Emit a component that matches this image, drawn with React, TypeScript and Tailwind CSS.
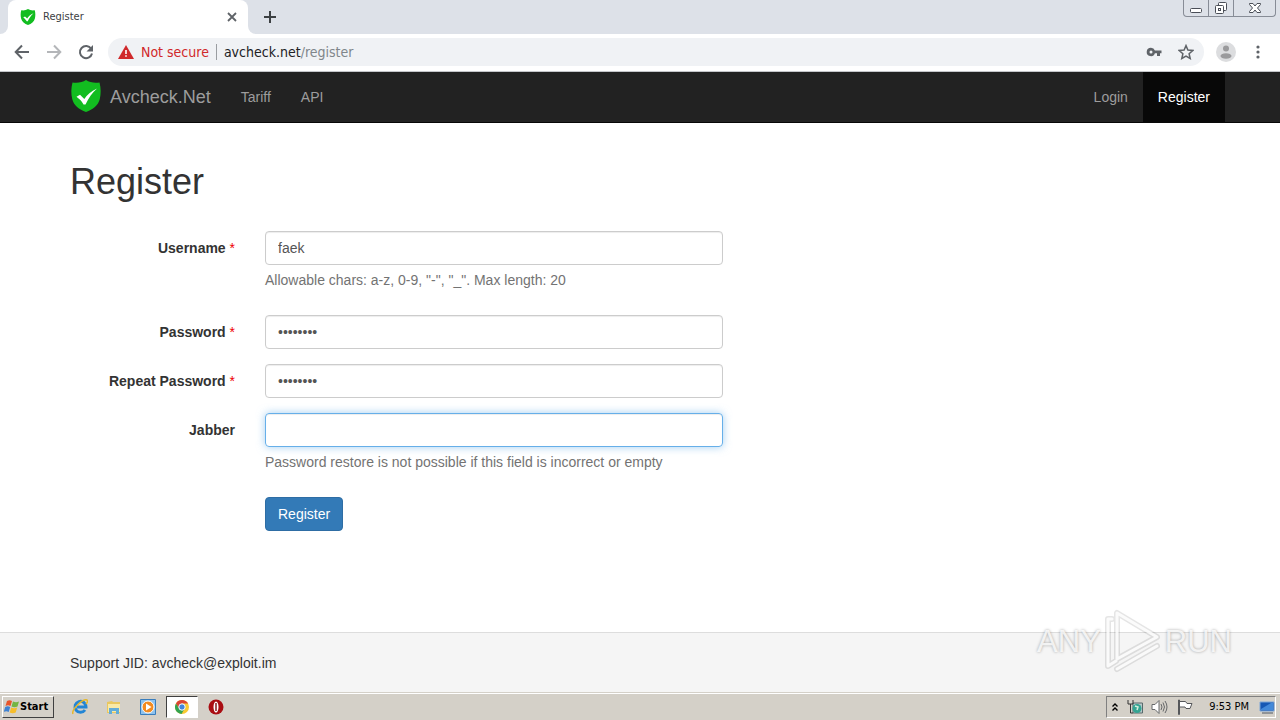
import { useState } from 'react';
import type { ReactNode } from 'react';

const Shield = ({ className }: { className: string }) => (
  <svg viewBox="0 0 30 32" className={className} aria-hidden="true">
    <path
      d="M15 0C11.500 2.400 6.500 3.300 1.500 2.500 0 8 0 14 1.200 19 2.800 25.500 8 29.500 15 32c7-2.500 12.200-6.500 13.800-13C30 14 30 8 28.500 2.500 23.500 3.300 18.500 2.400 15 0z"
      fill="#12bd20"
    />
    <path d="M5.500 16.800L9 14.800l4.300 4.200C16 15 20 11 26 8.500 21 13 17.500 18 14.500 24.500h-2C10.500 21 8.500 19 5.500 16.800z" fill="#fff" />
  </svg>
);

const TabStrip = () => (
  <div className="flex h-[34px] items-start justify-between bg-[#dde1e8]">
    <div className="flex h-full items-end">
      <div className="h-2 w-2 bg-white">
        <div className="h-2 w-2 rounded-br-lg bg-[#dde1e8]" />
      </div>
      <div className="flex h-full w-60 items-center rounded-t-lg bg-white pr-2.5 pl-3">
        <Shield className="h-4 w-4" />
        <span className="ml-[7px] flex-1 text-[11px] text-[#3c4043]">Register</span>
        <button aria-label="Close tab" className="flex h-3 w-3 items-center justify-center">
          <svg viewBox="0 0 12 12" className="h-3 w-3" stroke="#5f6368" strokeWidth="1.8">
            <path d="M2 2l8 8M10 2l-8 8" />
          </svg>
        </button>
      </div>
      <div className="h-2 w-2 bg-white">
        <div className="h-2 w-2 rounded-bl-lg bg-[#dde1e8]" />
      </div>
      <button aria-label="New tab" className="ml-[7px] flex h-full w-[14px] items-center">
        <svg viewBox="0 0 14 14" className="h-[14px] w-[14px]" stroke="#3c4043" strokeWidth="2">
          <path d="M7 1v12M1 7h12" />
        </svg>
      </button>
    </div>
    <div className="mr-1 flex h-[17px] overflow-hidden rounded-b border border-t-0 border-[#878c96] text-[#4a4e57]">
      <button aria-label="Minimize" className="flex w-[25px] items-center justify-center border-r border-[#878c96]">
        <svg viewBox="0 0 14 14" className="h-[14px] w-[14px]" fill="#fff" stroke="currentColor">
          <rect x="1.500" y="7.500" width="11" height="4" rx="1" />
        </svg>
      </button>
      <button aria-label="Restore" className="flex w-[25px] items-center justify-center border-r border-[#878c96]">
        <svg viewBox="0 0 14 14" className="h-[14px] w-[14px]" fill="#fff" stroke="currentColor">
          <rect x="4.500" y="1.500" width="8" height="8" rx="1" />
          <rect x="1.500" y="4.500" width="8" height="8" rx="1" />
          <rect x="4.500" y="7.500" width="2" height="2" />
        </svg>
      </button>
      <button aria-label="Close" className="flex w-[41px] items-center justify-center">
        <svg viewBox="0 0 14 14" className="h-[14px] w-[14px]" fill="#fff" stroke="currentColor">
          <path d="M1.500 2.500h3.500l2 2.500 2-2.500h3.500v1L9.500 7l3 3.500v1H9L7 9l-2 2.500H1.500v-1L4.500 7l-3-3.500z" />
        </svg>
      </button>
    </div>
  </div>
);

const Toolbar = () => (
  <div className="flex h-[38px] items-center border-b border-[#c4c6ca] bg-white pr-3.5 pb-px pl-3.5 text-[#5f6368]">
    <button aria-label="Back">
      <svg viewBox="0 0 16 16" className="h-4 w-4" fill="none" stroke="currentColor" strokeWidth="2">
        <path d="M15 8H2M8 1.500L1.700 8 8 14.500" />
      </svg>
    </button>
    <button aria-label="Forward" className="ml-4 text-[#b4b6b9]">
      <svg viewBox="0 0 16 16" className="h-4 w-4" fill="none" stroke="currentColor" strokeWidth="2">
        <path d="M1 8h13M8 1.500L14.300 8 8 14.500" />
      </svg>
    </button>
    <button aria-label="Reload" className="ml-4">
      <svg viewBox="0 0 16 16" className="h-4 w-4" fill="none" stroke="currentColor" strokeWidth="2">
        <path d="M13.200 4.800A6.100 6.100 0 1 0 14 9.500" />
        <path d="M15 1v6.500H8.500z" fill="currentColor" stroke="none" />
      </svg>
    </button>
    <div className="ml-3.5 flex h-7 flex-1 items-center rounded-full bg-[#f0f2f5] pr-2.5 pl-2.5">
      <svg viewBox="0 0 16 14" className="h-[14px] w-4" aria-hidden="true">
        <path d="M8 0l8 14H0z" fill="#d0292b" />
        <path d="M7.200 5h1.600v4H7.200zM7.200 10.200h1.600v1.600H7.200z" fill="#fff" />
      </svg>
      <span className="ml-[7px] text-sm text-[#d0292b]">Not secure</span>
      <span className="mx-[7px] h-4 w-px bg-[#9a9da1]" />
      <span className="flex-1 text-sm text-[#80868b]">
        <span className="text-[#202124]">avcheck.net</span>/register
      </span>
      <button aria-label="Saved password">
        <svg viewBox="0 0 16 10" className="h-2.5 w-4" fill="currentColor">
          <path
            fillRule="evenodd"
            d="M5 .8a4.200 4.200 0 1 0 3.900 5.500H11V9h3V6.300h1.500V3.600H8.900A4.200 4.200 0 0 0 5 .8zm0 2.700a1.500 1.500 0 1 1 0 3 1.500 1.500 0 0 1 0-3z"
          />
        </svg>
      </button>
      <button aria-label="Bookmark" className="ml-4">
        <svg viewBox="0 0 16 16" className="h-4 w-4" fill="none" stroke="currentColor" strokeWidth="1.500">
          <path d="M8 1.600l1.900 4.500 4.900.4-3.700 3.200 1.100 4.800L8 12l-4.200 2.500 1.100-4.800L1.200 6.500l4.900-.4z" />
        </svg>
      </button>
    </div>
    <button aria-label="Profile" className="ml-3">
      <svg viewBox="0 0 20 20" className="h-5 w-5">
        <circle cx="10" cy="10" r="10" fill="#dcdddf" />
        <circle cx="10" cy="6.500" r="3" fill="#9a9a9c" />
        <ellipse cx="10" cy="14" rx="5.500" ry="2.800" fill="#9a9a9c" />
      </svg>
    </button>
    <button aria-label="Menu" className="ml-[14px]">
      <svg viewBox="0 0 16 16" className="h-4 w-4" fill="currentColor">
        <circle cx="8" cy="3" r="1.600" />
        <circle cx="8" cy="8" r="1.600" />
        <circle cx="8" cy="13" r="1.600" />
      </svg>
    </button>
  </div>
);

const Navbar = () => (
  <nav className="border-b border-[#080808] bg-[#222] text-sm text-[#9d9d9d]">
    <div className="mx-auto flex h-[50px] max-w-[1170px] items-stretch pl-[15px]">
      <a href="#home" className="flex items-center text-lg">
        <Shield className="mr-2 mb-0.5 h-8 w-8" />
        Avcheck.Net
      </a>
      <a href="#tariff" className="ml-[15px] flex items-center px-[15px]">
        Tariff
      </a>
      <a href="#api" className="flex items-center px-[15px]">
        API
      </a>
      <a href="#login" className="ml-auto flex items-center px-[15px]">
        Login
      </a>
      <a href="#register" className="flex items-center bg-[#080808] px-[15px] text-white">
        Register
      </a>
    </div>
  </nav>
);

type FieldProps = {
  id: string;
  label: string;
  type?: string;
  initial?: string;
  required?: boolean;
  active?: boolean;
  hint?: string;
};

const Field = ({ id, label, type = 'text', initial = '', required, active, hint }: FieldProps) => {
  const [value, setValue] = useState(initial);

  return (
    <div className="mb-[15px] grid grid-cols-12">
      <label htmlFor={id} className="col-span-2 px-[15px] pt-[7px] text-right font-bold">
        {label}
        {required && <span className="font-normal text-[#e00]"> *</span>}
      </label>
      <div className="col-span-5 px-[15px]">
        <input
          id={id}
          type={type}
          value={value}
          onChange={(e) => setValue(e.target.value)}
          className={`block h-[34px] w-full rounded border px-3 text-[#555] outline-none ${
            active
              ? 'border-[#66afe9] shadow-[inset_0_1px_1px_rgba(0,0,0,0.075),0_0_8px_rgba(102,175,233,0.6)]'
              : 'border-[#ccc] shadow-[inset_0_1px_1px_rgba(0,0,0,0.075)]'
          }`}
        />
        {hint && <p className="mt-[5px] mb-2.5 text-[#737373]">{hint}</p>}
      </div>
    </div>
  );
};

const Watermark = () => (
  <div
    aria-hidden="true"
    className="absolute right-12 bottom-5 flex items-center font-['Liberation_Sans_Narrow','Liberation_Sans',sans-serif] text-[31px] leading-none text-white/80 [text-shadow:0_0_3px_rgba(0,0,0,0.35)]"
  >
    <span>ANY</span>
    <svg viewBox="0 0 56 62" className="mx-1 h-[62px] w-14 overflow-visible" fill="none" strokeLinejoin="round" strokeLinecap="round">
      <g stroke="#000" strokeOpacity="0.1" strokeWidth="6">
        <path d="M12 3v46l40-22zM7 9H3v47l8-5M12 59l40-23" />
      </g>
      <g stroke="#fff" strokeOpacity="0.85" strokeWidth="3">
        <path d="M12 3v46l40-22zM7 9H3v47l8-5M12 59l40-23" />
      </g>
    </svg>
    <span>RUN</span>
  </div>
);

const TaskButton = ({ label, active, children }: { label: string; active?: boolean; children: ReactNode }) => (
  <button
    aria-label={label}
    className={`flex h-[22px] w-8 items-center justify-center ${
      active ? 'border border-t-[#404040] border-r-white border-b-white border-l-[#404040] bg-white' : ''
    }`}
  >
    <svg viewBox="0 0 16 16" className="h-4 w-4">
      {children}
    </svg>
  </button>
);

const Taskbar = () => (
  <div className="flex h-7 items-center border-t border-[#d4d0c8] bg-[#d4d0c8] pr-1 pl-0.5 text-[11px] text-black shadow-[inset_0_1px_0_#fff]">
    <button className="flex h-[22px] w-[52px] items-center border border-t-white border-r-[#404040] border-b-[#404040] border-l-white pl-px font-bold">
      <svg viewBox="0 0 16 16" className="h-4 w-4 shrink-0" aria-hidden="true">
        <path d="M3 2c2-1 3-1 5 0L6.500 7c-2-1-3-1-5 0z" fill="#e8552b" />
        <path d="M9 2.500c2 1 4 1 6 0L13.500 7.500c-2 1-4 1-6 0z" fill="#74b544" />
        <path d="M1.200 8c2-1 3-1 5 0L4.700 13c-2-1-3-1-5 0z" fill="#3f82d2" />
        <path d="M7.200 8.500c2 1 4 1 6 0l-1.500 5c-2 1-4 1-6 0z" fill="#f6bd2b" />
      </svg>
      Start
    </button>
    <div className="ml-2.5 flex gap-0.5">
      <TaskButton label="Internet Explorer">
        <path d="M13 11a5.500 5.500 0 1 1 1-3H5" fill="none" stroke="#2285d5" strokeWidth="3" />
        <path d="M1 15C-1 11 11-1 15 1c1 1 0 3-1 4" fill="none" stroke="#e5b72c" strokeWidth="1.500" />
      </TaskButton>
      <TaskButton label="Windows Explorer">
        <path d="M1 3l5-1 1 1h7v11H1z" fill="#e9c75f" />
        <path d="M2 5h12v8H2z" fill="#f8e9a7" />
        <path d="M3 15V9h10v6h-3v-3H6v3z" fill="#62acd8" />
      </TaskButton>
      <TaskButton label="Media Player">
        <path d="M.5.500h15v15H.5z" fill="#8dc2ee" stroke="#397dbc" />
        <circle cx="8" cy="8" r="6" fill="#f38b20" stroke="#fff" />
        <path d="M6 4.500v7L11.500 8z" fill="#fff" />
      </TaskButton>
      <TaskButton label="Chrome" active>
        <circle cx="8" cy="8" r="7" fill="#f8c932" />
        <path d="M2 4.400A7 7 0 0 1 14.100 4.500H8L5 9.800z" fill="#dc4435" />
        <path d="M2 4.400A7 7 0 0 0 7.500 15l3.200-5.500H5z" fill="#32a350" />
        <circle cx="8" cy="8" r="3.200" fill="#4285dc" stroke="#fff" />
      </TaskButton>
      <TaskButton label="Opera">
        <circle cx="8" cy="8" r="7.500" fill="#a90d12" />
        <ellipse cx="8" cy="8" rx="2.500" ry="5.500" fill="#fff" />
        <path d="M7.300 4h1.400v8H7.300z" fill="#7c0c10" />
      </TaskButton>
    </div>
    <div className="ml-auto flex h-[22px] items-center border border-t-[#808080] border-r-white border-b-white border-l-[#808080] pl-1">
      <button aria-label="Show hidden icons" className="mr-2">
        <svg viewBox="0 0 8 10" className="h-2.5 w-2" fill="none" stroke="#000" strokeWidth="1.400">
          <path d="M1.500 4.500L4 2l2.500 2.500M1.500 8.500L4 6l2.500 2.500" />
        </svg>
      </button>
      <svg viewBox="0 0 16 16" className="h-4 w-4" aria-hidden="true">
        <path d="M6 4h9.500v10H6z" fill="#b8c9cb" stroke="#58696b" />
        <circle cx="10" cy="9.500" r="4.500" fill="#34a492" />
        <path d="M1 1v4h5V1M3.500 5v9H6" fill="none" stroke="#333" />
        <path d="M8 7l3 1-1 3" fill="none" stroke="#d4f0dd" strokeWidth="1.500" />
      </svg>
      <svg viewBox="0 0 18 16" className="ml-2 h-4 w-[18px]" fill="#fff" stroke="#66686a" aria-hidden="true">
        <path d="M1 5.500h3L8 1.500v13L4 10.500H1z" />
        <path d="M10 5q2 3 0 6M12 3.500q3 4.500 0 9M14 2q4 6 0 12" fill="none" />
      </svg>
      <svg viewBox="0 0 16 16" className="ml-2 h-4 w-4" fill="#fff" stroke="#55575a" aria-hidden="true">
        <path d="M1.500 1v14.500h1V1zM2.500 2.500h6l1.500 2h5l-2 5H9l-1-1.500H2.500z" />
      </svg>
      <span className="mr-2.5 ml-4">9:53 PM</span>
      <button aria-label="Show desktop" className="flex">
        <svg viewBox="0 0 16 16" className="h-4 w-4">
          <path d="M1 3h14v9H1z" fill="#1758b4" stroke="#7da6d8" />
          <path d="M2 10l10-6h2v7H2z" fill="#4389d9" />
          <path d="M3 14h11" stroke="#4f5966" />
        </svg>
      </button>
    </div>
  </div>
);

export default function App() {
  return (
    <div className="flex min-h-screen flex-col bg-white font-['Liberation_Sans',Arial,sans-serif] text-sm leading-5 text-[#333]">
      <header className="font-['DejaVu_Sans_Condensed','Noto_Sans',sans-serif]">
        <TabStrip />
        <Toolbar />
      </header>
      <Navbar />
      <main className="mx-auto w-full max-w-[1170px] flex-1 pt-10">
        <h1 className="mb-[30px] px-[15px] text-4xl leading-[38px]">Register</h1>
        <form onSubmit={(e) => e.preventDefault()}>
          <Field
            id="username"
            label="Username"
            initial="faek"
            required
            hint={'Allowable chars: a-z, 0-9, "-", "_". Max length: 20'}
          />
          <Field id="password" label="Password" type="password" initial="password" required />
          <Field id="repeat" label="Repeat Password" type="password" initial="password" required />
          <Field id="jabber" label="Jabber" active hint="Password restore is not possible if this field is incorrect or empty" />
          <div className="grid grid-cols-12">
            <div className="col-span-5 col-start-3 px-[15px]">
              <button type="submit" className="h-[34px] rounded border border-[#2e6da4] bg-[#337ab7] px-3 text-white">
                Register
              </button>
            </div>
          </div>
        </form>
      </main>
      <footer className="relative border-t border-[#ddd] bg-[#f5f5f5] pt-5 pb-[19px]">
        <p className="mx-auto max-w-[1170px] px-[15px]">Support JID: avcheck@exploit.im</p>
        <Watermark />
      </footer>
      <div className="font-['DejaVu_Sans_Condensed','Noto_Sans',sans-serif]">
        <Taskbar />
      </div>
    </div>
  );
}
